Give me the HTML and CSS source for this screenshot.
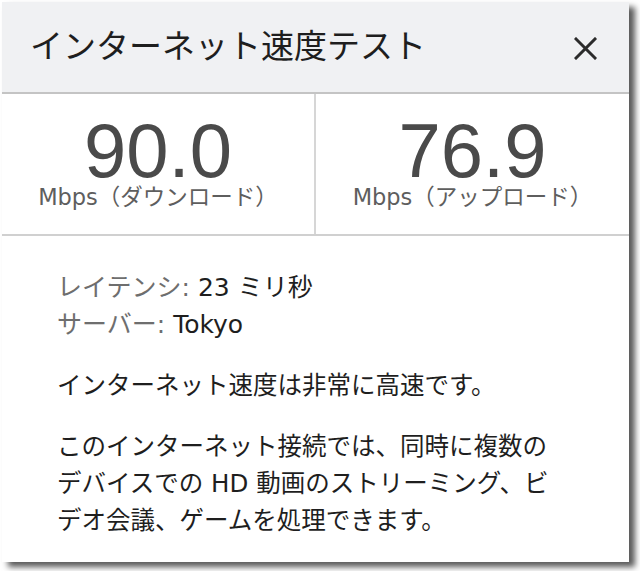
FILE: index.html
```html
<!DOCTYPE html>
<html lang="ja">
<head>
<meta charset="utf-8">
<title>インターネット速度テスト</title>
<link rel="stylesheet" href="styles.css">
</head>
<body>
<div class="card">
  <header class="header">
    <h1 class="title">インターネット速度テスト</h1>
    <svg class="close" width="23" height="23" viewBox="0 0 23 23" aria-label="閉じる">
      <path d="M2 2 L21 21 M21 2 L2 21" stroke="#2b2b2b" stroke-width="3" stroke-linecap="square" fill="none"/>
    </svg>
  </header>
  <section class="speeds">
    <div class="speed">
      <div class="value">90.0</div>
      <div class="unit">Mbps（ダウンロード）</div>
    </div>
    <div class="speed">
      <div class="value">76.9</div>
      <div class="unit">Mbps（アップロード）</div>
    </div>
  </section>
  <section class="info">
    <div class="meta">
      <div><span class="label">レイテンシ:</span> 23 ミリ秒</div>
      <div><span class="label">サーバー:</span> Tokyo</div>
    </div>
    <p class="para">インターネット速度は非常に高速です。</p>
    <p class="para">このインターネット接続では、同時に複数のデバイスでの HD 動画のストリーミング、ビデオ会議、ゲームを処理できます。</p>
  </section>
</div>
</body>
</html>
```

FILE: styles.css
```css
html, body {
  margin: 0;
  padding: 0;
  background: #ffffff;
}
body {
  font-family: "Liberation Sans", "Noto Sans CJK JP", sans-serif;
  width: 640px;
  height: 571px;
  overflow: hidden;
}
.card {
  margin: 2px 0 0 2px;
  width: 627px;
  height: 560px;
  background: #ffffff;
  box-shadow: 6px 5px 6px rgba(0, 0, 0, 0.65);
  display: flex;
  flex-direction: column;
  overflow: hidden;
}
.header {
  height: 90px;
  background: #f0f1f3;
  border-bottom: 2px solid #c4c4c4;
  display: flex;
  align-items: center;
  justify-content: space-between;
  padding: 0 32px 0 28px;
}
.title {
  margin: 0;
  font-weight: normal;
  font-size: 33px;
  line-height: 40px;
  color: #1e1e1e;
}
.close {
  display: block;
  margin-top: 2px;
}
.speeds {
  display: grid;
  grid-template-columns: 314px 1fr;
  border-bottom: 2px solid #d0d0d0;
}
.speed {
  padding: 22px 0 26px;
  text-align: center;
}
.speed:first-child {
  border-right: 2px solid #d6d6d6;
}
.value {
  font-size: 76px;
  line-height: 70px;
  color: #4a4a4a;
}
.unit {
  font-family: "DejaVu Sans", "Noto Sans CJK JP", sans-serif;
  font-size: 22.5px;
  line-height: 22px;
  color: #5e5e5e;
}
.info {
  padding: 33px 45px 0 55px;
  font-family: "DejaVu Sans", "Noto Sans CJK JP", sans-serif;
  font-size: 24.5px;
  line-height: 37px;
  color: #1e1e1e;
}
.meta {
  font-size: 25px;
}
.label {
  color: #6e6e6e;
}
.para {
  margin: 24px 0 0;
  width: 505px;
}
```
